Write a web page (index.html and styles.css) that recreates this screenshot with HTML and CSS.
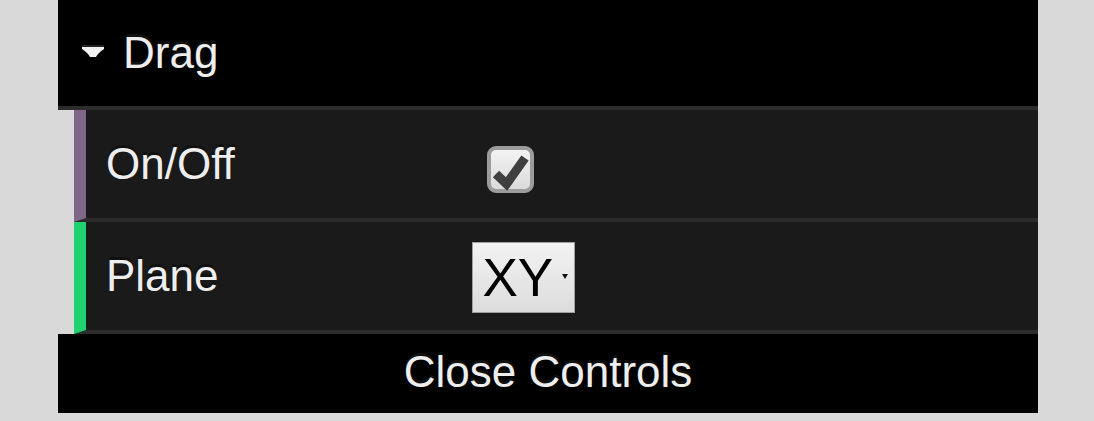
FILE: index.html
```html
<!DOCTYPE html>
<html>
<head>
<meta charset="utf-8">
<link rel="stylesheet" href="styles.css">
</head>
<body>
<div class="dg">
  <div class="title">
    <svg class="tri" width="24" height="14" viewBox="0 0 24 14">
      <rect x="1" y="0" width="22" height="2" fill="#222"/>
      <path d="M1 2 L23 2 L23 4 Q17 8 15 12 L9 12 Q7 8 1 4 Z" fill="#f2f2f2"/>
    </svg>
    <span>Drag</span>
  </div>
  <ul class="rows">
    <li class="cr boolean">
      <span class="name">On/Off</span>
      <div class="c">
        <svg class="checkbox" width="48" height="48" viewBox="0 0 48 48">
          <defs>
            <linearGradient id="cbg" x1="0" y1="0" x2="0" y2="1">
              <stop offset="0" stop-color="#f4f4f4"/>
              <stop offset="1" stop-color="#dadada"/>
            </linearGradient>
          </defs>
          <rect x="3" y="2" width="43" height="43" rx="7" ry="7" fill="url(#cbg)" stroke="#9c9c9c" stroke-width="4"/>
          <path d="M10 28 L20.5 38 L39 12" fill="none" stroke="#3f3f3f" stroke-width="9" stroke-linejoin="miter"/>
        </svg>
      </div>
    </li>
    <li class="cr string">
      <span class="name">Plane</span>
      <div class="c">
        <div class="select">
          <span class="val">XY</span>
          <span class="arrow"></span>
        </div>
      </div>
    </li>
  </ul>
  <div class="close">Close Controls</div>
</div>
</body>
</html>
```
FILE: styles.css
```css
html, body {
  margin: 0;
  padding: 0;
  background: #d9d9d9;
}
body {
  font-family: "Liberation Sans", Arial, sans-serif;
}
.dg {
  margin-left: 58px;
  width: 980px;
  color: #eeeeee;
  font-size: 44px;
  text-shadow: 0 -3px 0 #111;
}
.title {
  height: 106px;
  background: #000;
  border-bottom: 4px solid #2c2c2c;
  display: flex;
  align-items: center;
  padding-left: 23px;
}
.tri {
  display: block;
  margin-top: -2px;
}
.title span {
  margin-left: 18px;
  line-height: 106px;
}
.rows {
  list-style: none;
  margin: 0 0 0 16px;
  padding: 0;
}
.cr {
  height: 108px;
  background: #1a1a1a;
  border-left: 12px solid #806787;
  border-bottom: 4px solid #2c2c2c;
  padding: 0 16px 0 20px;
  display: flex;
  align-items: center;
}
.cr.string {
  border-left-color: #1ed36f;
}
.name {
  width: 40%;
  flex: none;
}
.c {
  flex: 1;
  display: flex;
  align-items: center;
}
.checkbox {
  display: block;
  margin: 11px 0 0 14px;
}
.select {
  width: 101px;
  height: 69px;
  margin-top: 2px;
  border: 1px solid #a0a0a0;
  background: linear-gradient(#f3f3f3, #dcdcdc);
  display: flex;
  align-items: center;
  position: relative;
  color: #000;
  text-shadow: none;
  font-size: 53px;
}
.val {
  margin-left: 9px;
  line-height: 69px;
}
.arrow {
  position: absolute;
  left: 89px;
  top: 31px;
  width: 0;
  height: 0;
  border-left: 3px solid transparent;
  border-right: 3px solid transparent;
  border-top: 5px solid #111;
}
.close {
  height: 79px;
  background: #000;
  text-align: center;
  line-height: 76px;
}
```
